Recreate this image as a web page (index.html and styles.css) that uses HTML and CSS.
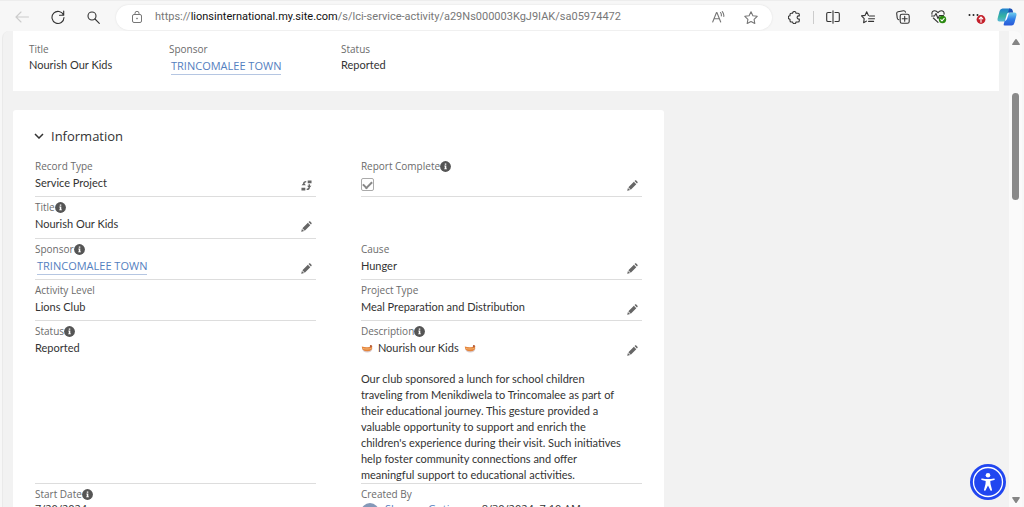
FILE: index.html
```
<!DOCTYPE html>
<html lang="en">
<head>
    <meta charset="UTF-8">
    <meta name="viewport" content="width=device-width, initial-scale=1.0">
    <title>Nourish Our Kids</title>
    <link rel="stylesheet" href="styles.css">
</head>
<body>
    <!-- shared icons -->
    <svg class="sprite" aria-hidden="true">
        <symbol id="pencil" viewBox="0 0 12 12">
            <path d="M1.500 7.900 7.500 1.900l2.600 2.600-6 6zM8.200 1.200l.6-.6c.4-.4.9-.4 1.300 0l1.300 1.300c.4.400.4.900 0 1.300l-.6.600zM1 8.600l2.400 2.400-2.700.8c-.3.100-.5-.1-.4-.4z"/>
        </symbol>
        <symbol id="info" viewBox="0 0 11 11">
            <circle cx="5.500" cy="5.500" r="5.400"/>
            <path fill="#fff" d="M4.800 2.400h1.500v1.400H4.800zM4.400 4.600h1.900v2.900h.6v.8H4.200v-.8h.6V5.400h-.4z"/>
        </symbol>
        <symbol id="bowl" viewBox="0 0 12 10">
            <path fill="#d8ccd0" d="M1 5h10.500Q11 9.600 6.300 9.600 1.600 9.600 1 5z"/>
            <path fill="#e5853c" d="M.8 3.500q2.200.8 5.200.8t5.200-.8q.4 4.700-5 4.700T.8 3.500z"/>
            <path fill="#f4b877" d="M1.500 5.100q4.500 1 9 0l-.3.900q-4.200.8-8.400 0z"/>
            <path fill="#b9603a" d="M9 2q2.300.1 2.300 1.300 0 .8-2.500 1.200z"/>
        </symbol>
    </svg>

    <div class="toolbar">
        <button class="tool back" aria-label="Back">
            <svg width="14" height="12" viewBox="0 0 14 12"><path d="M13.500 6H1M6 1 1 6l5 5"/></svg>
        </button>
        <button class="tool reload" aria-label="Refresh">
            <svg width="14" height="14" viewBox="0 0 14 14"><path d="M12.500 5A6 6 0 1 0 13 7.500M12.700 1v4.200H8.500"/></svg>
        </button>
        <button class="tool search" aria-label="Search">
            <svg width="13" height="13" viewBox="0 0 13 13"><circle cx="5" cy="5" r="4"/><path d="m8 8 4.300 4.300"/></svg>
        </button>
        <div class="address">
            <svg class="lock" width="10" height="12" viewBox="0 0 10 12"><rect x=".5" y="3.500" width="9" height="8" rx="1.500"/><path d="M3 3.500V2.300a2 2 0 0 1 4 0v1.200"/><circle cx="5" cy="7.500" r=".5"/></svg>
            <span class="url">https://<b>lionsinternational.my.site.com</b>/s/lci-service-activity/a29Ns000003KgJ9IAK/sa05974472</span>
            <button class="tool" aria-label="Read aloud">
                <svg width="13" height="12" viewBox="0 0 13 12"><path d="M.7 11 4.500 1.500h.4L8.700 11M2.100 7.800h5.200M8.500 1.500q1.200 1.300.8 3.500M10.300.6q1.800 2 1.500 4.800"/></svg>
            </button>
            <button class="tool" aria-label="Add to favorites">
                <svg width="14" height="13" viewBox="0 0 14 13"><path d="m7 .8 1.900 3.900 4.300.6-3.100 3 .7 4.200L7 10.500l-3.800 2 .7-4.200-3.100-3 4.300-.6z"/></svg>
            </button>
        </div>
        <div class="tools">
            <button class="tool" aria-label="Extensions">
                <svg width="13" height="13" viewBox="0 0 13 13"><path d="M3.300 2.200h1.300a1.700 1.700 0 0 1 3.400 0h2q1.300 0 1.300 1.300v1.400h-.6a1.600 1.600 0 0 0 0 3.200h.6v1.600q0 1.300-1.300 1.300H8a1.700 1.700 0 0 1-3.400 0H3.300Q2 11 2 9.700V8.200a1.700 1.700 0 0 1 0-3.400V3.500q0-1.300 1.300-1.300z"/></svg>
            </button>
            <span class="divider"></span>
            <button class="tool" aria-label="Split screen">
                <svg width="14" height="14" viewBox="0 0 14 14"><path d="M5 2.500H2Q.7 2.500.7 3.800v6.400q0 1.300 1.300 1.300h3M9 2.500h3q1.300 0 1.300 1.300v6.400q0 1.300-1.300 1.300H9M7 .8v12.400"/></svg>
            </button>
            <button class="tool" aria-label="Favorites">
                <svg width="14" height="13" viewBox="0 0 14 13"><path d="M7.400 4.400 5.700.8 4 4.400l-3.500.5 2.700 2.700-.6 4.200 2.900-1.700M8.500 5h5M7.600 7.700h5.900M7.600 10.400h5"/></svg>
            </button>
            <button class="tool" aria-label="Collections">
                <svg width="14" height="14" viewBox="0 0 14 14"><rect x="4.200" y="4.200" width="9" height="9" rx="1.800"/><path d="M8.700 6.200v5M6.200 8.700h5M2.800 9.800Q1.500 9.400 1.200 8L.7 3.500Q.6 2 2 1.700L7.500.8Q9 .6 9.500 2.200"/></svg>
            </button>
            <button class="tool" aria-label="Browser essentials">
                <svg width="16" height="14" viewBox="0 0 16 14"><path d="M1 4.300C.5 2 2 .8 3.700.8 5.500.8 6.300 1.800 7 2.700 7.700 1.800 8.500.8 10.300.8 12 .8 13.500 2 13 4.300M2.300 8 7 12.300M.5 6h3L5 3.500l2 5 1.500-3h4"/><circle class="ok" cx="11.500" cy="9.500" r="3.700"/><path class="mark" d="m9.800 9.600 1.200 1.200 2.200-2.400"/></svg>
            </button>
            <button class="tool" aria-label="Settings and more">
                <svg width="18" height="16" viewBox="0 0 18 16"><g class="dots"><circle cx="1.500" cy="6" r="1"/><circle cx="5.500" cy="6" r="1"/><circle cx="9.500" cy="6" r="1"/></g><circle class="alert" cx="13" cy="10.500" r="4.400"/><path class="mark" d="M13 13.200V8M11.200 9.800 13 8l1.800 1.800"/></svg>
            </button>
            <button class="tool copilot" aria-label="Copilot">
                <svg width="20" height="18" viewBox="0 0 20 18">
                    <defs>
                        <linearGradient id="left" x1="0" y1="0" x2="0" y2="1"><stop offset="0" stop-color="#1e7fd0"/><stop offset=".6" stop-color="#35b3a0"/><stop offset="1" stop-color="#5ab7d8"/></linearGradient>
                        <linearGradient id="right" x1="0" y1="0" x2="0" y2="1"><stop offset="0" stop-color="#6fd0ee"/><stop offset=".5" stop-color="#2f7fe6"/><stop offset="1" stop-color="#2a58d8"/></linearGradient>
                    </defs>
                    <path fill="url(#left)" d="M5.500.5h6.800q1.500 0 1 1.500l-3 9.500q-.6 2-2.700 2H2.500Q0 13.500.6 10.500l2-7.500Q3.300.5 5.500.5z"/>
                    <path fill="url(#right)" d="M14.500 17.500H7.700q-1.500 0-1-1.500l3-9.500q.6-2 2.700-2h5.100q2.500 0 1.900 3l-2 7.500q-.7 2.500-2.900 2.500z"/>
                    <path fill="#1c50b4" d="M12 .5h1.500q1.600 0 2 1.600l.7 2.400h-3.800q-1.200 0-1.900.9l1.500-4z"/>
                    <path fill="#fff" d="M10 6.300 7.800 13q1.600-.3 2.200-2L12 4.600q-1.500.3-2 1.700z"/>
                </svg>
            </button>
        </div>
    </div>

    <div class="window">
        <main class="page">
            <header class="highlights">
                <div class="highlight">
                    <span class="label">Title</span>
                    <span class="value">Nourish Our Kids</span>
                </div>
                <div class="highlight wide">
                    <span class="label">Sponsor</span>
                    <a class="link" href="#">TRINCOMALEE TOWN</a>
                </div>
                <div class="highlight">
                    <span class="label">Status</span>
                    <span class="value">Reported</span>
                </div>
            </header>

            <section class="card">
                <h2>
                    <button class="section-toggle" aria-expanded="true">
                        <svg width="10" height="6" viewBox="0 0 10 6"><path d="m1 1 4 4 4-4"/></svg>
                        Information
                    </button>
                </h2>
                <div class="fields">
                    <div class="field">
                        <span class="label">Record Type</span>
                        <span class="value">Service Project</span>
                        <button class="edit" aria-label="Change Record Type">
                            <svg viewBox="0 0 12 12"><path d="M7.300.5h4.200v3H7.300zM.5 8.500h4.200v3H.5zM.6 5.700 3 3l2.400 2.700zM6.600 6.300h4.800L9 9zM2.200 5.500V4Q2.200 1 5.700 1v1.500q-1.900 0-1.900 1.700v1.300zM9.800 4.500v3q0 3.500-3.600 3.500V9.500q2 0 2-2v-3z"/></svg>
                        </button>
                    </div>
                    <div class="field">
                        <label class="label" for="report-complete">Report Complete<svg class="info"><use href="#info"/></svg></label>
                        <input type="checkbox" id="report-complete" checked>
                        <button class="edit" aria-label="Edit Report Complete"><svg><use href="#pencil"/></svg></button>
                    </div>
                    <div class="field">
                        <span class="label">Title<svg class="info"><use href="#info"/></svg></span>
                        <span class="value">Nourish Our Kids</span>
                        <button class="edit" aria-label="Edit Title"><svg><use href="#pencil"/></svg></button>
                    </div>
                    <div class="field empty"></div>
                    <div class="field">
                        <span class="label">Sponsor<svg class="info"><use href="#info"/></svg></span>
                        <a class="link" href="#">TRINCOMALEE TOWN</a>
                        <button class="edit" aria-label="Edit Sponsor"><svg><use href="#pencil"/></svg></button>
                    </div>
                    <div class="field">
                        <span class="label">Cause</span>
                        <span class="value">Hunger</span>
                        <button class="edit" aria-label="Edit Cause"><svg><use href="#pencil"/></svg></button>
                    </div>
                    <div class="field">
                        <span class="label">Activity Level</span>
                        <span class="value">Lions Club</span>
                    </div>
                    <div class="field">
                        <span class="label">Project Type</span>
                        <span class="value">Meal Preparation and Distribution</span>
                        <button class="edit" aria-label="Edit Project Type"><svg><use href="#pencil"/></svg></button>
                    </div>
                    <div class="field">
                        <span class="label">Status<svg class="info"><use href="#info"/></svg></span>
                        <span class="value">Reported</span>
                    </div>
                    <div class="field">
                        <span class="label">Description<svg class="info"><use href="#info"/></svg></span>
                        <div class="value description">
                            <p><svg class="bowl"><use href="#bowl"/></svg>Nourish our Kids<svg class="bowl"><use href="#bowl"/></svg></p>
                            <p>Our club sponsored a lunch for school children<br>traveling from Menikdiwela to Trincomalee as part of<br>their educational journey. This gesture provided a<br>valuable opportunity to support and enrich the<br>children's experience during their visit. Such initiatives<br>help foster community connections and offer<br>meaningful support to educational activities.</p>
                        </div>
                        <button class="edit" aria-label="Edit Description"><svg><use href="#pencil"/></svg></button>
                    </div>
                    <div class="field">
                        <span class="label">Start Date<svg class="info"><use href="#info"/></svg></span>
                        <span class="date">7/20/2024</span>
                    </div>
                    <div class="field">
                        <span class="label">Created By</span>
                        <div class="author"><span class="avatar"></span><span><a href="#">Shawna Gutierrez</a>, 8/30/2024, 7:10 AM</span></div>
                    </div>
                </div>
            </section>
        </main>
        <div class="scrollbar">
            <svg width="8" height="6" viewBox="0 0 8 6"><path d="M4 0q.5 0 .8.500L7.800 5q.3 1-.8 1H1Q-.1 6 .2 5L3.200.5Q3.500 0 4 0z"/></svg>
            <div class="thumb"></div>
            <svg class="down" width="8" height="6" viewBox="0 0 8 6"><path d="M4 6q-.5 0-.8-.5L.2 1Q-.1 0 1 0h6q1.100 0 .8 1L4.800 5.500Q4.500 6 4 6z"/></svg>
        </div>
    </div>

    <button class="accessibility" aria-label="Accessibility options">
        <svg width="36" height="36" viewBox="0 0 36 36">
            <circle cx="18" cy="18" r="18" fill="#2146f0"/>
            <circle cx="18" cy="18" r="14.500" fill="none" stroke="#fff" stroke-width="1.300"/>
            <circle cx="18" cy="11.300" r="2.300" fill="#fff"/>
            <path fill="#fff" d="M12 14.400q3 .6 6 .6t6-.6q.9 0 .9.700 0 .5-.7.800l-3.900 1 .2 3.200 1.500 5.600q.1.900-.6 1.100-.7.100-1-.6L18 21.500l-2.400 4.700q-.3.700-1 .6-.7-.2-.6-1.100l1.500-5.600.2-3.200-3.900-1q-.7-.3-.7-.8 0-.7.9-.7z"/>
        </svg>
    </button>
</body>
</html>
```
FILE: styles.css
```
* {
    box-sizing: border-box;
}

body {
    margin: 0;
    height: 100vh;
    display: flex;
    flex-direction: column;
    overflow: hidden;
    background-color: #f7f7f7;
    font-family: "Open Sans", "Noto Sans", sans-serif;
    font-size: 11px;
    line-height: 16px;
    color: #333;
}

button {
    padding: 0;
    border: none;
    background: none;
    font: inherit;
    color: inherit;
    cursor: pointer;
}

svg {
    display: block;
    flex: none;
}

.sprite {
    position: absolute;
    width: 0;
    height: 0;
}

/* browser toolbar */
.toolbar {
    flex: none;
    display: flex;
    align-items: center;
    height: 31px;
    padding: 2px 7px 0 15px;
    border-top: 1px solid #ededed;
}

.tool svg {
    fill: none;
    stroke: #333;
    stroke-width: 1.1;
    stroke-linecap: round;
    stroke-linejoin: round;
}

.back svg {
    stroke: #ccc;
}

.reload {
    margin-left: 22px;
}

.search {
    margin-left: 22px;
}

.address {
    flex: 1;
    display: flex;
    align-items: center;
    gap: 19px;
    height: 25px;
    margin-left: 16px;
    padding: 0 14px 0 16px;
    border-radius: 13px;
    background-color: #fff;
    box-shadow: 0 0 2px #ddd;
}

.address svg {
    fill: none;
    stroke: #777;
}

.url {
    flex: 1;
    margin-left: -6px;
    font-family: Roboto, "Open Sans", sans-serif;
    color: #777;
    white-space: nowrap;
}

.url b {
    font-weight: 400;
    color: #111;
}

.tools {
    display: flex;
    align-items: center;
    gap: 21px;
    margin-left: 16px;
}

.divider {
    width: 1px;
    height: 13px;
    margin: 0 -9px;
    background-color: #ccc;
}

.tool .ok {
    fill: #2c8a12;
    stroke: none;
}

.tool .alert {
    fill: #c4202b;
    stroke: none;
}

.tool .mark {
    stroke: #fff;
}

.tool .dots {
    fill: #222;
    stroke: none;
}

.copilot {
    margin-left: -10px;
}

.copilot svg {
    stroke: none;
}

/* page area */
.window {
    flex: 1;
    min-height: 0;
    display: flex;
    margin: 0 2px;
    border-left: 1px solid #eaeaea;
    border-radius: 7px 7px 0 0;
    background-color: #f2f2f2;
    overflow: hidden;
}

.page {
    flex: 1;
    padding: 0 10px;
}

.highlights {
    display: flex;
    height: 60px;
    padding: 10px 16px;
    background-color: #fff;
}

.highlight {
    width: 140px;
    display: flex;
    flex-direction: column;
    align-items: flex-start;
}

.highlight.wide {
    width: 172px;
}

.label {
    display: flex;
    align-items: center;
    margin-bottom: 1px;
    font-size: 10px;
    color: #6b6b6b;
}

.highlight .label {
    margin-bottom: 0;
}

.info {
    width: 11px;
    height: 11px;
    fill: #555;
}

.value {
    font-family: Lato, "Open Sans", sans-serif;
}

.link {
    height: 17px;
    margin: 0 2px;
    border-bottom: 1px solid #b5c6e2;
    color: #5480c0;
    text-decoration: none;
}

.highlight .link {
    margin-top: 1px;
}

.card {
    width: 66%;
    min-width: 560px;
    margin-top: 19px;
    padding: 17px 22px;
    border-radius: 3px;
    background-color: #fff;
}

h2 {
    margin: 0 0 11px;
    font-size: 13px;
    font-weight: 400;
    line-height: 18px;
}

.section-toggle {
    display: flex;
    align-items: center;
    gap: 7px;
    margin-left: -1px;
}

.section-toggle svg {
    fill: none;
    stroke: #333;
    stroke-width: 1.5;
}

.fields {
    display: grid;
    grid-template-columns: 1fr 1fr;
    column-gap: 45px;
}

.field {
    position: relative;
    display: flex;
    flex-direction: column;
    align-items: flex-start;
    min-height: 41px;
    padding-top: 2px;
    border-bottom: 1px solid #ddd;
}

.field.empty {
    min-height: 42px;
    border-color: transparent;
}

.edit {
    position: absolute;
    top: 24px;
    right: 4px;
}

.edit svg {
    width: 11px;
    height: 11px;
    fill: #666;
}

input[type="checkbox"] {
    appearance: none;
    display: grid;
    place-items: center;
    width: 13px;
    height: 13px;
    margin: 3px 0 0;
    border: 1px solid #aaa;
    border-radius: 2px;
    background-color: #fff;
}

input[type="checkbox"]:checked::before {
    content: "";
    width: 7px;
    height: 4px;
    border-left: 2px solid #888;
    border-bottom: 2px solid #888;
    transform: translateY(-1px) rotate(-45deg);
}

.description p {
    margin: 0 0 15px;
}

.description p:first-child {
    display: flex;
    align-items: center;
    gap: 5px;
}

.description p:last-child {
    margin-bottom: 0;
}

.bowl {
    width: 12px;
    height: 10px;
}

.date,
.author {
    line-height: 12px;
}

.author {
    display: flex;
    gap: 6px;
    align-items: flex-start;
}

.avatar {
    width: 18px;
    height: 18px;
    border-radius: 50%;
    background-color: #8498b8;
}

.author a {
    color: #5480c0;
    text-decoration: none;
}

/* scrollbar */
.scrollbar {
    width: 13px;
    display: flex;
    flex-direction: column;
    align-items: center;
    padding: 8px 0 4px;
    background-color: #fafafa;
}

.scrollbar svg {
    fill: #858585;
}

.thumb {
    width: 7px;
    height: 23%;
    margin-top: 48px;
    border-radius: 4px;
    background-color: #8a8a8a;
}

.down {
    margin-top: auto;
}

.accessibility {
    position: absolute;
    right: 18px;
    bottom: 7px;
}
```
